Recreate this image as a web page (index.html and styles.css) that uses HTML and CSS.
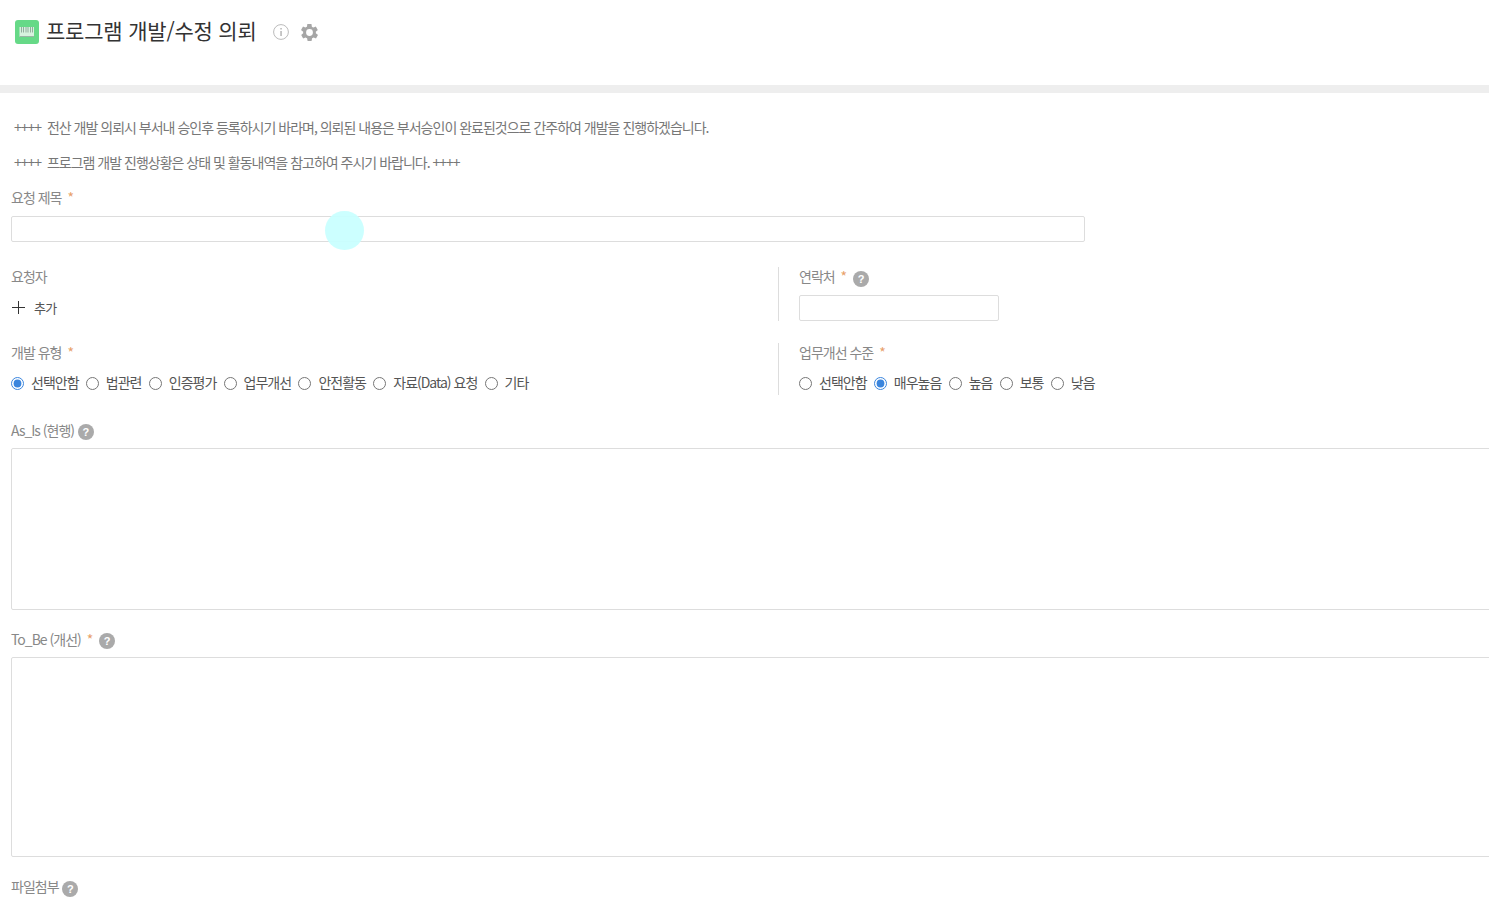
FILE: index.html
```html
<!DOCTYPE html>
<html lang="ko">
<head>
<meta charset="utf-8">
<title>프로그램 개발/수정 의뢰</title>
<link rel="stylesheet" href="styles.css">
</head>
<body>
<header class="header">
  <span class="app-icon">
    <svg viewBox="0 0 24 24" width="24" height="24"><rect width="24" height="24" rx="3" fill="#66d987"/><rect x="4.500" y="7" width="14.500" height="10" fill="#f4f7f4" opacity=".8"/><path d="M6.500 7v5.500M8.500 7v5.500M11 7v5.500M13 7v5.500M15.500 7v5.500M17.500 7v5.500" stroke="#8aa595" stroke-width=".9" fill="none"/><path d="M4.500 16.500h14.500" stroke="#9ab5a5" stroke-width="1"/></svg>
  </span>
  <h1 class="title">프로그램 개발/수정 의뢰</h1>
  <svg class="info-icon" viewBox="0 0 16 16" width="16" height="16"><circle cx="8" cy="8" r="7.400" fill="none" stroke="#bbb" stroke-width="1"/><rect x="7.400" y="7" width="1.300" height="5" fill="#aaa"/><rect x="7.400" y="4" width="1.300" height="1.500" fill="#aaa"/></svg>
  <svg class="gear-icon" viewBox="2 2 20 20" width="17" height="17"><path fill="#a6a6a6" fill-rule="evenodd" d="M19.400 13c.1-.3.1-.7.1-1s0-.7-.1-1l2.100-1.600c.2-.2.2-.4.1-.6l-2-3.500c-.1-.2-.4-.3-.6-.2l-2.500 1c-.5-.4-1.100-.7-1.700-1l-.4-2.600c0-.3-.2-.5-.5-.5h-4c-.3 0-.5.2-.5.4l-.4 2.700c-.6.2-1.100.6-1.700 1l-2.500-1c-.2-.1-.5 0-.6.2l-2 3.500c-.1.2-.1.5.1.6L4.600 11c0 .3-.1.7-.1 1s0 .7.1 1l-2.100 1.600c-.2.2-.2.4-.1.6l2 3.500c.1.2.4.3.6.2l2.500-1c.5.4 1.100.7 1.700 1l.4 2.600c0 .2.2.4.5.4h4c.3 0 .5-.2.5-.4l.4-2.600c.6-.3 1.200-.6 1.700-1l2.500 1c.2.1.5 0 .6-.2l2-3.500c.1-.2.1-.5-.1-.6L19.400 13zM12 16a4 4 0 1 1 0-8 4 4 0 0 1 0 8z"/></svg>
</header>

<main class="form">
  <p class="notice notice-first">++++&nbsp; 전산 개발 의뢰시 부서내 승인후 등록하시기 바라며, 의뢰된 내용은 부서승인이 완료된것으로 간주하여 개발을 진행하겠습니다.</p>
  <p class="notice">++++&nbsp; 프로그램 개발 진행상황은 상태 및 활동내역을 참고하여 주시기 바랍니다. ++++</p>

  <div class="field field-title">
    <label class="label">요청 제목 <span class="req">*</span></label>
    <input class="input input-title" type="text">
  </div>

  <div class="row row-person">
    <div class="col-left">
      <label class="label">요청자</label>
      <div class="add"><span class="plus"></span>추가</div>
    </div>
    <div class="col-right">
      <label class="label">연락처 <span class="req">*</span> <span class="help help-gap">?</span></label>
      <input class="input input-phone" type="text">
    </div>
  </div>

  <div class="row row-type">
    <div class="col-left">
      <label class="label">개발 유형 <span class="req">*</span></label>
      <div class="radios">
        <label class="radio"><input type="radio" name="t" checked>선택안함</label>
        <label class="radio"><input type="radio" name="t">법관련</label>
        <label class="radio"><input type="radio" name="t">인증평가</label>
        <label class="radio"><input type="radio" name="t">업무개선</label>
        <label class="radio"><input type="radio" name="t">안전활동</label>
        <label class="radio"><input type="radio" name="t">자료(Data) 요청</label>
        <label class="radio"><input type="radio" name="t">기타</label>
      </div>
    </div>
    <div class="col-right">
      <label class="label">업무개선 수준 <span class="req">*</span></label>
      <div class="radios">
        <label class="radio"><input type="radio" name="l">선택안함</label>
        <label class="radio"><input type="radio" name="l" checked>매우높음</label>
        <label class="radio"><input type="radio" name="l">높음</label>
        <label class="radio"><input type="radio" name="l">보통</label>
        <label class="radio"><input type="radio" name="l">낮음</label>
      </div>
    </div>
  </div>

  <div class="field field-asis">
    <label class="label">As_Is (현행) <span class="help help-up">?</span></label>
    <textarea class="area area-asis"></textarea>
  </div>
  <div class="field field-tobe">
    <label class="label">To_Be (개선) <span class="req">*</span> <span class="help help-gap help-up">?</span></label>
    <textarea class="area area-tobe"></textarea>
  </div>
  <div class="field field-file">
    <label class="label">파일첨부 <span class="help">?</span></label>
  </div>
</main>
<div class="cursor"></div>
</body>
</html>
```
FILE: styles.css
```css
* { box-sizing: border-box; }
html, body { height: 901px; overflow: hidden; }
body {
  margin: 0;
  background: #fff;
  color: #777;
  font-family: "Noto Sans CJK KR", "Noto Sans", sans-serif;
  font-size: 14px;
  letter-spacing: -1px;
}
.header {
  height: 93px;
  border-bottom: 8px solid #eee;
  display: flex;
  align-items: flex-start;
  padding: 20px 0 0 15px;
}
.app-icon { width: 24px; height: 24px; display: block; }
.app-icon svg { display: block; }
.title {
  margin: -6px 0 0 7px;
  font-size: 21px;
  font-weight: 400;
  line-height: 32px;
  letter-spacing: -0.2px;
  color: #333;
}
.info-icon { margin: 4px 0 0 16px; }
.gear-icon { margin: 4px 0 0 12px; }
.form { width: 1600px; padding: 0 0 0 11px; }
.notice { margin: 0 0 0 3px; height: 20px; line-height: 19px; color: #777; }
.notice-first { margin-top: 25px; }
.notice + .notice { margin-top: 15px; }
.label { display: block; height: 20px; line-height: 18px; color: #888; }
.req { color: #e8a06a; margin-left: 3px; }
.help {
  display: inline-block;
  width: 16px; height: 16px;
  margin-left: 1px;
  border-radius: 50%;
  background: #aaa;
  color: #fff;
  font-size: 11px;
  font-weight: 700;
  line-height: 16px;
  text-align: center;
  letter-spacing: 0;
  vertical-align: -1px;
  font-family: "Liberation Sans", sans-serif;
}
.help-gap { margin-left: 4px; }
.help-up { vertical-align: 0; }
.field-title { margin-top: 15px; }
.input {
  display: block;
  height: 26px;
  border: 1px solid #ddd;
  border-radius: 2px;
  background: #fff;
  outline: 0;
}
.input-title { width: 1074px; margin-top: 8px; }
.input-phone { width: 200px; margin-top: 8px; }
.row { display: flex; }
.row-person { margin-top: 25px; height: 54px; }
.row-type { margin-top: 22px; height: 52px; }
.col-left { width: 767px; }
.col-right { border-left: 1px solid #ddd; padding-left: 20px; width: 400px; }
.add { display: flex; align-items: center; margin-top: 10px; color: #555; height: 20px; font-size: 13px; letter-spacing: -0.7px; }
.plus { width: 13px; height: 13px; margin: 0 9px 0 1px; background: linear-gradient(#333,#333) center/13px 1px no-repeat, linear-gradient(#333,#333) center/1px 13px no-repeat; }
.radios { display: flex; margin-top: 10px; height: 20px; }
.radio { display: flex; align-items: flex-start; height: 20px; line-height: 18px; color: #555; margin-right: 7.300px; }
.radio input { width: 13px; height: 13px; margin: 3.500px 7px 0 0; accent-color: #3a85dd; }
.field-asis { margin-top: 26px; }
.area {
  display: block;
  width: 1600px;
  border: 1px solid #ddd;
  border-radius: 2px;
  outline: 0;
  resize: none;
  background: #fff;
}
.area-asis { height: 162px; margin-top: 7px; }
.field-tobe { margin-top: 20px; }
.area-tobe { height: 200px; margin-top: 7px; }
.field-file { margin-top: 20px; }
.cursor {
  position: absolute;
  left: 325.400px; top: 210.800px;
  width: 39px; height: 39.500px;
  border-radius: 50%;
  background: rgba(200, 255, 255, 0.93);
}
```
